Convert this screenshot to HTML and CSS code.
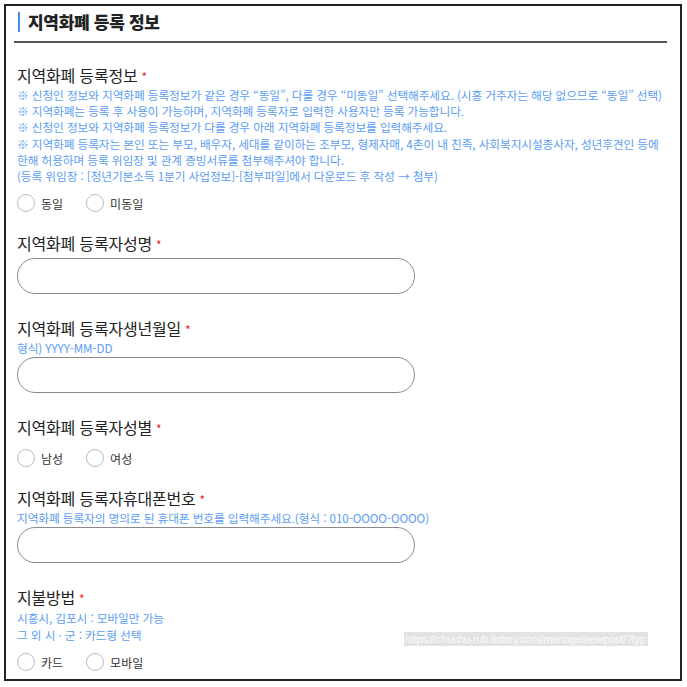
FILE: index.html
```html
<!DOCTYPE html>
<html lang="ko">
<head>
    <meta charset="UTF-8">
    <meta name="viewport" content="width=device-width, initial-scale=1.0">
    <title>지역화폐 등록 정보</title>
    <link rel="stylesheet" href="styles.css">
</head>
<body>
    <div class="frame">
        <header class="section-head">
            <h2>지역화폐 등록 정보</h2>
        </header>

        <div class="field">
            <div class="label">지역화폐 등록정보<span class="req">*</span></div>
            <div class="hint">
                <p>※ 신청인 정보와 지역화폐 등록정보가 같은 경우 “동일”, 다를 경우 “미동일” 선택해주세요. (시흥 거주자는 해당 없으므로 “동일” 선택)</p>
                <p>※ 지역화폐는 등록 후 사용이 가능하며, 지역화폐 등록자로 입력한 사용자만 등록 가능합니다.</p>
                <p>※ 신청인 정보와 지역화폐 등록정보가 다를 경우 아래 지역화폐 등록정보를 입력해주세요.</p>
                <p>※ 지역화폐 등록자는 본인 또는 부모, 배우자, 세대를 같이하는 조부모, 형제자매, 4촌이 내 친족, 사회복지시설종사자, 성년후견인 등에 한해 허용하며 등록 위임장 및 관계 증빙서류를 첨부해주셔야 합니다.</p>
                <p>(등록 위임장 : [청년기본소득 1분기 사업정보]-[첨부파일]에서 다운로드 후 작성 → 첨부)</p>
            </div>
            <div class="radios">
                <label class="radio"><input type="radio" name="same"><span class="dot"></span>동일</label>
                <label class="radio"><input type="radio" name="same"><span class="dot"></span>미동일</label>
            </div>
        </div>

        <div class="field has-input">
            <div class="label">지역화폐 등록자성명<span class="req">*</span></div>
            <input class="text-input" type="text">
        </div>

        <div class="field has-input">
            <div class="label">지역화폐 등록자생년월일<span class="req">*</span></div>
            <div class="hint short"><p>형식) YYYY-MM-DD</p></div>
            <input class="text-input" type="text">
        </div>

        <div class="field">
            <div class="label">지역화폐 등록자성별<span class="req">*</span></div>
            <div class="radios">
                <label class="radio"><input type="radio" name="sex"><span class="dot"></span>남성</label>
                <label class="radio"><input type="radio" name="sex"><span class="dot"></span>여성</label>
            </div>
        </div>

        <div class="field has-input">
            <div class="label">지역화폐 등록자휴대폰번호<span class="req">*</span></div>
            <div class="hint short"><p>지역화폐 등록자의 명의로 된 휴대폰 번호를 입력해주세요.(형식 : 010-OOOO-OOOO)</p></div>
            <input class="text-input" type="text">
        </div>

        <div class="field">
            <div class="label">지불방법<span class="req">*</span></div>
            <div class="hint tall">
                <p>시흥시, 김포시 : 모바일만 가능</p>
                <p>그 외 시 · 군 : 카드형 선택</p>
            </div>
            <div class="radios">
                <label class="radio"><input type="radio" name="pay"><span class="dot"></span>카드</label>
                <label class="radio"><input type="radio" name="pay"><span class="dot"></span>모바일</label>
            </div>
        </div>

        <span class="url-tag">https://chuchu-rub.tistory.com/manage/newpost/?typ</span>
    </div>
</body>
</html>
```

FILE: styles.css
```css
:root {
    --text: #222; --hint: #5b9df3; --line: #555;
    --accent: #3f8ff0; --req: #e8262b; --field-border: #8a8a8a;
}
* { box-sizing: border-box; }
html, body { margin: 0; background: #fff; }
body { font-family: 'Noto Sans CJK KR', 'Noto Sans', sans-serif; color: var(--text); padding: 4px 5px 6px 4px; }
.frame { border: 2px solid #222; height: 677px; padding: 0 13px 0 11px; position: relative; overflow: hidden; }
.section-head { border-bottom: 2px solid var(--line); padding: 6px 0 9px 0; margin: 0 0 21px -3px; }
.section-head h2 { margin: 0 0 0 4px; font-size: 17px; font-weight: 900; line-height: 20px; border-left: 2px solid var(--accent); padding-left: 8px; letter-spacing: -0.3px; }
.field { margin-bottom: 20px; }
.field.has-input { margin-bottom: 23px; }
.label { font-size: 16px; line-height: 22px; letter-spacing: -0.2px; }
.req { color: var(--req); font-size: 12px; margin-left: 4px; line-height: 10px; }
.hint { color: var(--hint); font-size: 11.7px; line-height: 16.2px; letter-spacing: -0.1px; margin-top: 1px; }
.hint.short { line-height: 15px; margin-top: 0; padding-top: 1px; }
.hint.tall { line-height: 17px; margin-top: 1px; }
.hint p { margin: 0; }
.label + .text-input { margin-top: 4px; }
.hint + .text-input { margin-top: 2px; }
.text-input { display: block; width: 398px; height: 36px; border: 1px solid var(--field-border); border-radius: 18px; background: #fff; outline: none; }
.radios { display: flex; gap: 23px; margin-top: 10px; }
.label + .radios { margin-top: 11px; }
.radio { display: flex; align-items: center; font-size: 12px; color: #333; cursor: pointer; }
.radio input { display: none; }
.dot { width: 18px; height: 18px; border: 1px solid #bbb; border-radius: 50%; margin-right: 6px; }
.url-tag { position: absolute; left: 398px; top: 626px; background: #e3e3e3; color: #fafafa; font-family: 'Liberation Sans', sans-serif; font-size: 11px; line-height: 14px; padding: 0 2px 0 1px; white-space: nowrap; letter-spacing: -0.27px; }
```
